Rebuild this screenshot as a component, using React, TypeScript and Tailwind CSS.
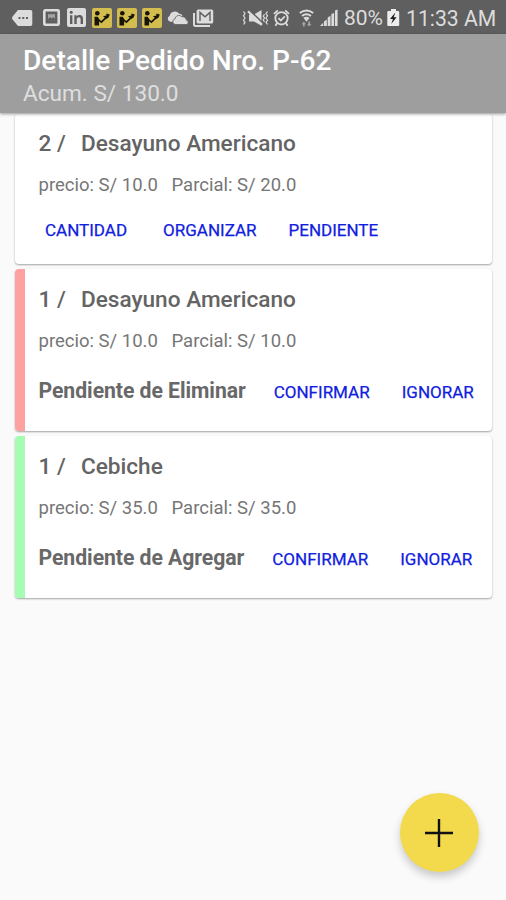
import type { ReactNode } from 'react';

interface OrderItem {
  id: number;
  quantity: number;
  name: string;
  price: string;
  partial: string;
  status?: 'remove' | 'add';
}

const items: OrderItem[] = [
  { id: 1, quantity: 2, name: 'Desayuno Americano', price: '10.0', partial: '20.0' },
  { id: 2, quantity: 1, name: 'Desayuno Americano', price: '10.0', partial: '10.0', status: 'remove' },
  { id: 3, quantity: 1, name: 'Cebiche', price: '35.0', partial: '35.0', status: 'add' },
];

function WaiterIcon() {
  return (
    <svg width="20" height="20" viewBox="0 0 20 20" className="shrink-0">
      <rect width="20" height="20" rx="2" fill="#d3bd4e" />
      <g fill="#171508">
        <circle cx="5.3" cy="5.2" r="2.3" />
        <path d="M2.5 8.8h3.2l1.4 2.2v6.4H2.5z" />
        <path d="M5.4 10.8l4 3.4 4.4-4.4" fill="none" stroke="#171508" strokeWidth="1.7" />
        <path d="M11 8.2l3.4-.8v-1.8l3.4 1-1.4 3.2-2.2 1.2z" />
      </g>
    </svg>
  );
}

function StatusBar() {
  return (
    <div className="flex h-[34px] items-center bg-[#5f5f5f] pt-px pl-[12px] text-[#dcdcdc]">
      <svg width="21" height="16" viewBox="0 0 21 16" className="shrink-0">
        <path d="M6 0h12.5A1.8 1.8 0 0 1 20.3 1.8v12.4a1.8 1.8 0 0 1-1.8 1.8H6L.6 9.4a2.2 2.2 0 0 1 0-2.8z" fill="currentColor" />
        <path d="M6.5 7h2v2h-2zM10.3 7h2v2h-2zM14 7h2v2h-2z" fill="#5f5f5f" />
      </svg>
      <svg width="17" height="17" viewBox="0 0 17 17" className="ml-[10px] shrink-0">
        <rect x="1.3" y="1.3" width="14.4" height="14.4" rx="1" fill="none" stroke="currentColor" strokeWidth="2.6" />
        <path d="M3.8 4h9.4v9H3.8z" fill="#5f5f5f" />
        <path d="M5 5.2h7v6H5z" fill="currentColor" opacity="0.55" />
        <path d="M5 11.5V10l2-2 1.7 1.6L10.2 8l1.8 2v1.5z" fill="#5f5f5f" />
      </svg>
      <svg width="19" height="19" viewBox="0 0 19 19" className="ml-[7px] shrink-0">
        <rect width="19" height="19" rx="2" fill="currentColor" />
        <g fill="#5f5f5f">
          <circle cx="4.2" cy="4.2" r="1.5" />
          <path d="M3 7.2h2.4V16H3zM7.3 7.2h2.3v1.3c.6-1 1.6-1.5 2.9-1.5 2.5 0 3.5 1.5 3.5 4V16h-2.4v-4.6c0-1.4-.5-2.2-1.7-2.2-1.4 0-2.2.9-2.2 2.4V16H7.3z" />
        </g>
      </svg>
      <div className="ml-[6px] flex gap-[5px]">
        <WaiterIcon />
        <WaiterIcon />
        <WaiterIcon />
      </div>
      <svg width="22" height="14" viewBox="0 0 22 14" className="ml-[5px] shrink-0">
        <path d="M3.2 10.7A3 3 0 0 1 2.6 5 5.4 5.4 0 0 1 12 2.5 3.8 3.8 0 0 1 15.6 5L8 11z" fill="currentColor" />
        <path d="M8.2 13.5a2.8 2.8 0 0 1-.3-5.5 4 4 0 0 1 7-2.2 3.7 3.7 0 0 1 4.4 3.2 2.3 2.3 0 0 1 .2 4.5z" fill="currentColor" stroke="#5f5f5f" strokeWidth="0.8" />
      </svg>
      <svg width="21" height="18" viewBox="0 0 21 18" className="ml-[4px] shrink-0">
        <path d="M1 4v11.5A1.5 1.5 0 0 0 2.5 17H17" fill="none" stroke="currentColor" strokeWidth="2" />
        <rect x="3.6" y="0.5" width="16.6" height="14" rx="1.5" fill="currentColor" />
        <path d="M7 12V3.4l5 4.4 5-4.4V12" fill="none" stroke="#5f5f5f" strokeWidth="1.4" />
      </svg>

      <svg width="27" height="18" viewBox="0 0 27 18" className="ml-[28px] shrink-0">
        <g fill="none" stroke="currentColor" strokeWidth="1.2">
          <path d="M1.5 2.5L3 4.6 1.5 6.8 3 9 1.5 11.2 3 13.4 1.5 15.5M25.5 2.5L24 4.6l1.5 2.2L24 9l1.5 2.2-1.5 2.2 1.5 2.1M22.5 5.2l-1.2 2 1.2 1.8-1.2 2 1.2 2" />
        </g>
        <path d="M7 5.4h5L19.5 1v15.8L12 12.6H7z" fill="currentColor" />
        <path d="M7.4 1.2l13.4 12.6" stroke="#5f5f5f" strokeWidth="1.6" />
        <path d="M6 2.2l14 13.6" stroke="currentColor" strokeWidth="2.2" />
      </svg>
      <svg width="17" height="18" viewBox="0 0 17 18" className="ml-[4px] shrink-0">
        <g fill="none" stroke="currentColor" strokeWidth="1.8">
          <circle cx="8.5" cy="9.3" r="6.2" />
          <path d="M5.4 9.2l2.4 2.3 4-4.2M1 4.8L4.8 1.3M16 4.8l-3.8-3.5M4.2 14L2.4 16.8M12.8 14l1.8 2.8" />
        </g>
      </svg>
      <svg width="15" height="18" viewBox="0 0 15 18" className="ml-[9px] shrink-0">
        <g fill="none" stroke="currentColor" strokeWidth="1.9">
          <path d="M.8 4Q7.5-1 14.2 4M3 7q4.5-3.4 9 0M5 9.6q2.5-1.8 5 0" />
        </g>
        <path d="M5.2 9.8h4.6l-2.3 3z" fill="currentColor" />
        <path d="M4.8 12.5L7 15.2H5.7V17.5H3.9v-2.3H2.6zM10.2 17.5L8 14.9h1.3v-2.3h1.8v2.3h1.3z" fill="currentColor" opacity="0.55" />
      </svg>
      <svg width="18" height="18" viewBox="0 0 18 18" className="ml-[6px] shrink-0">
        <path d="M0 17l3.2-3.2V17zM4 12.6l2.8-2V17H4zM7.7 8.4l2.8-1.6V17H7.7zM11.4 5l2.7-1V17h-2.7zM15 1.4l2.6-1V17H15z" fill="currentColor" />
      </svg>
      <span className="ml-[6px] w-[43px] shrink-0 pt-[2px] text-[21px] leading-none whitespace-nowrap">80%</span>
      <svg width="13" height="18" viewBox="0 0 13 18" className="shrink-0">
        <path d="M4 0h5v2h2.2A1 1 0 0 1 12.2 3v13a1 1 0 0 1-1 1H1.3a1 1 0 0 1-1-1V3a1 1 0 0 1 1-1H4z" fill="#ededed" />
        <path d="M8.3 3.5L3 10h3l-1.8 5 5.4-6.7H6.7z" fill="#1c1c1c" />
      </svg>
      <span className="ml-[6px] shrink-0 pt-[2px] text-[21.2px] leading-none whitespace-nowrap">11:33 AM</span>
    </div>
  );
}

function ActionButton({ children }: { children: ReactNode }) {
  return <button className="text-[17px] leading-5 text-[#1020e0] [-webkit-text-stroke:0.25px_#1020e0]">{children}</button>;
}

function OrderCard({ item }: { item: OrderItem }) {
  return (
    <div
      className={`flex overflow-hidden rounded bg-white shadow-[0_1px_2px_rgba(0,0,0,0.35)] ${item.status ? 'h-[162px]' : 'h-[150px]'}`}
    >
      {item.status && (
        <div className={`w-[10px] shrink-0 ${item.status === 'remove' ? 'bg-[#fda1a1]' : 'bg-[#a5fdb4]'}`} />
      )}
      <div className={`flex-1 ${item.status ? 'pt-[17px] pl-[13.5px]' : 'pt-4 pl-[23.5px]'}`}>
        <div className="flex h-[28px] items-center text-[22.6px] font-medium text-[#646464]">
          <span className="w-[42.5px]">{item.quantity} /</span>
          <span>{item.name}</span>
        </div>
        <div className="mt-4 flex h-[24px] items-center text-[18.5px] text-[#767676]">
          <span className="w-[133px]">precio: S/ {item.price}</span>
          <span>Parcial: S/ {item.partial}</span>
        </div>
        {item.status ? (
          <div className="mt-[22px] flex h-[30px] items-center">
            <span className="mr-[28px] text-[21.2px] font-bold tracking-[-0.05px] text-[#686868]">
              {item.status === 'remove' ? 'Pendiente de Eliminar' : 'Pendiente de Agregar'}
            </span>
            <div className="flex gap-8 pt-[2px]">
              <ActionButton>CONFIRMAR</ActionButton>
              <ActionButton>IGNORAR</ActionButton>
            </div>
          </div>
        ) : (
          <div className="mt-5 flex h-[24px] items-center pl-[6.5px]">
            <ActionButton>CANTIDAD</ActionButton>
            <div className="ml-9 flex gap-8">
              <ActionButton>ORGANIZAR</ActionButton>
              <ActionButton>PENDIENTE</ActionButton>
            </div>
          </div>
        )}
      </div>
    </div>
  );
}

export default function App() {
  return (
    <div className="relative flex h-[900px] w-[506px] flex-col overflow-hidden bg-[#fafafa] font-['Roboto',sans-serif]">
      <StatusBar />
      <header className="z-10 h-[79px] bg-[#9e9e9e] pt-[11px] pl-[23px] shadow-[0_1px_3px_rgba(0,0,0,0.4)]">
        <h1 className="text-[28.1px] leading-8 font-medium text-white">Detalle Pedido Nro. P-62</h1>
        <p className="mt-[3px] text-[22.6px] leading-7 text-[#dedede]">Acum. S/ 130.0</p>
      </header>
      <main className="flex flex-col gap-[5px] pt-px pr-[14px] pl-[15px]">
        {items.map((item) => (
          <OrderCard key={item.id} item={item} />
        ))}
      </main>
      <button
        aria-label="Agregar"
        className="absolute right-[27px] bottom-[28px] flex size-[79px] items-center justify-center rounded-full bg-[#f2da4c] pr-[2px] shadow-[0_5px_9px_rgba(0,0,0,0.2)]"
      >
        <svg width="28" height="28" viewBox="0 0 28 28" fill="none" stroke="#111" strokeWidth="2.4">
          <path d="M14 0v28M0 14h28" />
        </svg>
      </button>
    </div>
  );
}
